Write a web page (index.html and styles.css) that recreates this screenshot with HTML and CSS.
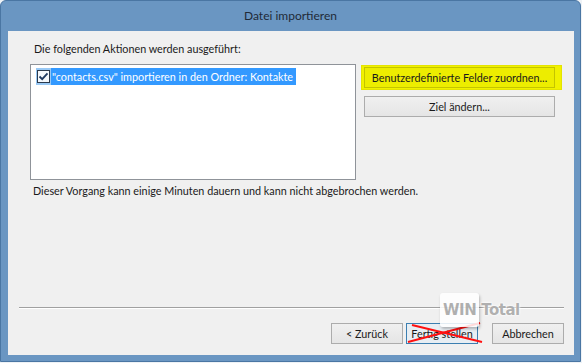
FILE: index.html
```html
<!DOCTYPE html>
<html lang="de">
<head>
    <meta charset="UTF-8">
    <title>Datei importieren</title>
    <link rel="stylesheet" href="styles.css">
</head>
<body>
    <div class="window">
        <div class="titlebar">Datei importieren</div>
        <div class="client">
            <p class="intro">Die folgenden Aktionen werden ausgeführt:</p>
            <div class="main-row">
                <div class="listbox">
                    <div class="list-item">
                        <span class="check-cell">
                            <svg class="checkbox" width="13" height="13" viewBox="0 0 13 13">
                                <rect x="0.5" y="0.5" width="12" height="12" fill="#f4f8fc" stroke="#2b3a4d"/>
                                <path d="M2.5 6.5 L5.2 9.2 L10.5 3.3" fill="none" stroke="#1f3a60" stroke-width="1.8"/>
                            </svg>
                        </span>
                        <span class="item-text">"contacts.csv" importieren in den Ordner: Kontakte</span>
                    </div>
                </div>
                <div class="side-buttons">
                    <div class="marker">
                        <button class="btn btn-wide">Benutzerdefinierte Felder zuordnen...</button>
                    </div>
                    <button class="btn btn-wide">Ziel ändern...</button>
                </div>
            </div>
            <p class="note">Dieser Vorgang kann einige Minuten dauern und kann nicht abgebrochen werden.</p>
            <div class="spacer"></div>
            <hr class="separator">
            <div class="footer">
                <button class="btn">&lt; Zurück</button>
                <div class="finish-wrap">
                    <button class="btn btn-default">Fertig stellen</button>
                    <svg class="cross" width="76" height="22" viewBox="0 0 76 22">
                        <line x1="1" y1="20" x2="73" y2="1" stroke="#ff1010" stroke-width="2"/>
                        <line x1="5" y1="3" x2="75" y2="20" stroke="#ff1010" stroke-width="2"/>
                    </svg>
                    <div class="watermark">
                        <span class="wm-box">WIN</span><span class="wm-text">Total</span>
                    </div>
                </div>
                <button class="btn btn-cancel">Abbrechen</button>
            </div>
        </div>
    </div>
</body>
</html>
```

FILE: styles.css
```css
body {
    margin: 0;
    background-color: #eef2f6;
    font-family: Lato, 'Open Sans', sans-serif;
    font-size: 10.8px;
    color: #1a1a1a;
}

.window {
    width: 581px;
    height: 362px;
    box-sizing: border-box;
    background-color: #6a96c2;
    border: 1px solid #4a76a3;
    border-radius: 6px 6px 0 0;
    display: flex;
    flex-direction: column;
}

.titlebar {
    height: 30px;
    line-height: 30px;
    text-align: center;
    font-size: 12px;
    color: #1f2a38;
}

.client {
    flex: 1;
    margin: 0 6px 6px 7px;
    background-color: #f0f0f0;
    display: flex;
    flex-direction: column;
    padding: 10px 10px 11px 22px;
}

.intro {
    margin: 0 0 7px 4px;
    line-height: 16px;
}

.main-row {
    display: flex;
    gap: 8px;
}

.listbox {
    width: 326px;
    height: 116px;
    box-sizing: border-box;
    background-color: #fff;
    border: 1px solid #8f9399;
    padding: 3px 5px;
}

.list-item {
    display: flex;
    align-items: stretch;
    height: 17px;
}

.check-cell {
    width: 15px;
    background-color: #99c9f5;
    display: flex;
    align-items: center;
    justify-content: center;
}

.item-text {
    background-color: #3399ff;
    color: #fff;
    padding: 0 3px 0 1px;
    line-height: 17px;
    white-space: nowrap;
}

.side-buttons {
    display: flex;
    flex-direction: column;
    align-items: flex-start;
    gap: 6px;
    padding-top: 1px;
}

.marker {
    background-color: #f1f100;
    border: 1px solid #e4e400;
    padding: 1px 6px 1px 2px;
    margin-left: -3px;
}

.btn {
    font-family: inherit;
    font-size: 10.8px;
    color: #1a1a1a;
    height: 21px;
    width: 72px;
    padding: 0;
    white-space: nowrap;
    background: linear-gradient(#f0f0f0, #e5e5e5);
    border: 1px solid #acacac;
    cursor: pointer;
}

.btn-wide {
    display: block;
    width: 191px;
}

.marker .btn {
    background: #eded00;
    border-color: #c4c400;
}

.btn-default {
    border-color: #3c7fb1;
    background: #e8eef3;
}

.btn-cancel {
    margin-left: 11px;
}

.note {
    margin: 3px 0 0 3px;
    line-height: 16px;
}

.spacer {
    flex: 1;
}

.separator {
    margin: 0 0 14px -11px;
    border: none;
    border-top: 1px solid #a0a0a0;
    border-bottom: 1px solid #fff;
    height: 0;
}

.footer {
    display: flex;
    justify-content: flex-end;
    gap: 3px;
}

.finish-wrap {
    position: relative;
}

.cross {
    position: absolute;
    left: 1px;
    top: -1px;
}

.watermark {
    position: absolute;
    left: 34px;
    top: -30px;
    display: flex;
    align-items: center;
    font-family: 'DejaVu Sans', sans-serif;
    font-weight: bold;
    font-size: 15px;
    letter-spacing: -0.5px;
    color: rgba(150, 150, 150, 0.75);
}

.wm-box {
    background-color: rgba(255, 255, 255, 0.85);
    border-radius: 3px;
    padding: 8px 3px;
    box-shadow: 1px 2px 3px rgba(0, 0, 0, 0.25);
}

.wm-text {
    margin-left: 2px;
    text-shadow: 0 0 3px #fff, 0 0 2px #fff;
}
```
